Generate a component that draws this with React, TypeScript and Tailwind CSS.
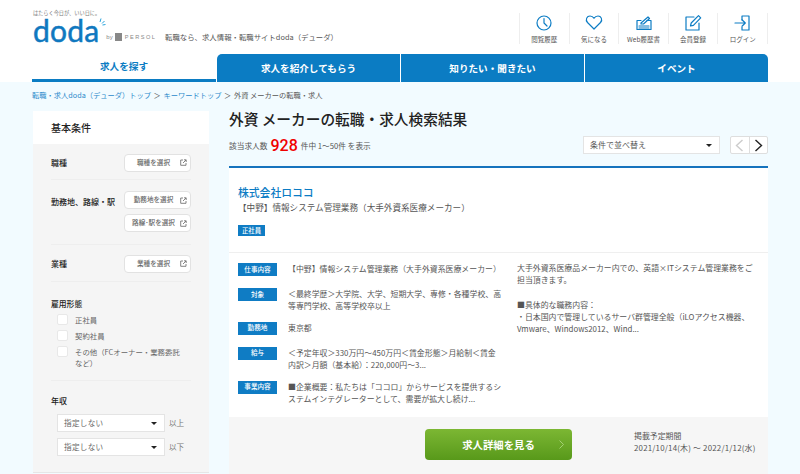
import type { ReactNode } from 'react';

const jp = 'font-["Noto_Sans_CJK_JP","Noto_Sans",sans-serif]';

function HeaderLink({ label, children }: { label: string; children: ReactNode }) {
  return (
    <div className="flex h-[31px] w-[49.6px] flex-col items-center justify-between border-r border-[#eeeeee] pb-[1px]">
      <svg width="20" height="20" viewBox="0 0 20 20" fill="none" stroke="#0c7cc4" strokeWidth="1.2" strokeLinejoin="round" strokeLinecap="round">
        {children}
      </svg>
      <span className="text-[6.5px] leading-[8px] text-[#555]">{label}</span>
    </div>
  );
}

function SelectButton({ label }: { label: string }) {
  return (
    <div className="flex h-[18px] w-[67px] items-center justify-between rounded-[4px] border border-[#e2e2e2] bg-white pl-[4px] pr-[3px] text-[6.6px] text-[#666]">
      <span className="flex-1 text-center whitespace-nowrap">{label}</span>
      <svg width="7" height="7" viewBox="0 0 7 7" fill="none" stroke="#666" strokeWidth="0.8" className="ml-[2px] shrink-0">
        <path d="M3 1H.7v5.3H6V4" />
        <path d="M3 4l3-3M4 .8h2.2V3" />
      </svg>
    </div>
  );
}

function Caret() {
  return <span className="h-0 w-0 border-x-[3px] border-t-[3px] border-x-transparent border-t-[#222]" />;
}

function Check({ label }: { label: ReactNode }) {
  return (
    <div className="flex items-start">
      <span className="h-[11px] w-[11px] shrink-0 rounded-[2px] border border-[#e8e8e8] bg-white" />
      <span className="ml-[7px] w-[108px] text-[7.4px] leading-[11px] text-[#666]">{label}</span>
    </div>
  );
}

function Salary({ suffix }: { suffix: string }) {
  return (
    <div className="flex items-center">
      <div className="flex h-[18px] w-[108px] items-center justify-between border border-[#e4e4e4] bg-white pl-[6px] pr-[7px] text-[7.6px] tracking-[0.3px] text-[#666]">
        指定しない
        <Caret />
      </div>
      <span className="ml-[4px] text-[7.6px] text-[#777]">{suffix}</span>
    </div>
  );
}

function JobRow({ label, children }: { label: string; children: ReactNode }) {
  return (
    <div className="mb-[9px] flex min-h-[16px] items-start">
      <span className="flex h-[13px] w-[39px] shrink-0 items-center justify-center bg-[#0f7cc4] text-[6.6px] font-medium text-white">{label}</span>
      <p className="ml-[11px] w-[216px] text-[7.9px] leading-[12.4px] text-[#555]">{children}</p>
    </div>
  );
}

export default function App() {
  return (
    <div className={`${jp} h-[474px] w-[800px] overflow-hidden bg-white`}>
      {/* Header */}
      <header className="flex h-[54px] pl-[33px] pr-[32px]">
        <div className="w-[132px] pt-[10px]">
          <p className="text-[5.2px] leading-[6px] text-[#777]">はたらく今日が、いい日に。</p>
          <div className="mt-[2px] flex items-end">
            <span className="font-['Lato',sans-serif] text-[30px] leading-[22px] tracking-[0.2px] text-[#0f78bf] [-webkit-text-stroke:0.5px_#0f78bf]">doda</span>
            <svg width="7" height="9" viewBox="0 0 7 9" fill="none" stroke="#29a3dc" strokeWidth="1" className="mb-[14px] shrink-0">
              <path d="M2 0.5L1 4M5.5 3L3 5.5M6.5 6.5L3.5 7" />
            </svg>
            <span className="whitespace-nowrap font-['Liberation_Sans',sans-serif] text-[6px] leading-[8px] text-[#888]">by</span>
            <span className="ml-[2px] h-[8px] w-[7px] shrink-0 bg-[#888]" />
            <span className="ml-[3px] font-['Liberation_Sans',sans-serif] text-[5.6px] leading-[8px] tracking-[1.5px] text-[#888]">PERSOL</span>
          </div>
        </div>
        <p className="pt-[32px] text-[7.4px] leading-[10px] whitespace-nowrap text-[#555]">転職なら、求人情報・転職サイトdoda（デューダ）</p>
        <nav className="ml-auto mt-[13px] flex h-[31px] border-l border-[#eeeeee]">
          <HeaderLink label="閲覧履歴">
            <circle cx="10" cy="10" r="7" />
            <path d="M10 5.500V10l3 3" />
          </HeaderLink>
          <HeaderLink label="気になる">
            <path d="M10 16L3.500 9.500C1 6.500 3 3 6 3c2 0 3.200 1 4 2.300 .8-1.300 2-2.300 4-2.300 3 0 5 3.500 2.500 6.500z" />
          </HeaderLink>
          <HeaderLink label="Web履歴書">
            <path d="M3 7.500h4M13 7.500h4v9H3v-9" />
            <path d="M7 10l7-6 1.500 1.500-6 5.500H7zM5 13h10M5 15h10" />
          </HeaderLink>
          <HeaderLink label="会員登録">
            <path d="M16 10v7H3V4h8" />
            <path d="M7.500 13l.7-3 7.300-7.300 2.200 2.200-7.300 7.400z" />
          </HeaderLink>
          <HeaderLink label="ログイン">
            <path d="M9 7V3h7v14H9v-3" />
            <path d="M2 10h10M9 6.800L12.300 10 9 13.200" />
          </HeaderLink>
        </nav>
      </header>

      {/* Tabs */}
      <nav className="flex h-[28px] gap-[1px] px-[32px] text-[9.6px] font-bold">
        <div className="flex w-[184px] items-center justify-center border-b-[3px] border-[#0b7cc3] text-[#0b7cc3]">求人を探す</div>
        <div className="flex w-[183px] items-center justify-center rounded-tl-[5px] bg-[#0b7cc3] text-white">求人を紹介してもらう</div>
        <div className="flex w-[183px] items-center justify-center bg-[#0b7cc3] text-white">知りたい・聞きたい</div>
        <div className="flex w-[183px] items-center justify-center rounded-tr-[5px] bg-[#0b7cc3] text-white">イベント</div>
      </nav>

      <div className="h-[392px] bg-[#f2fbff] px-[32px]">
        {/* Breadcrumb */}
        <p className="h-[29px] pt-[8px] text-[7.25px] leading-[10px] whitespace-nowrap text-[#555]">
          <span className="text-[#2b8acb]">転職・求人doda（デューダ）トップ</span>
          <span className="mx-[1px]"> ＞ </span>
          <span className="text-[#2b8acb]">キーワードトップ</span>
          <span className="mx-[1px]"> ＞ </span>
          <span>外資 メーカーの転職・求人</span>
        </p>

        <div className="flex items-start">
          {/* Sidebar */}
          <aside className="ml-[1px] w-[176px] shrink-0 border-b border-[#e6e6e6] bg-[#f5f5f5]">
            <h2 className="flex h-[33px] items-center bg-white pb-[1px] pl-[18px] text-[10px] font-medium text-[#222]">基本条件</h2>
            <div className="px-[18px] text-[8px] font-medium text-[#222]">
              <div className="flex h-[36px] items-center justify-between border-b border-[#eeeeee] pt-[2px]">
                <span>職種</span>
                <SelectButton label="職種を選択" />
              </div>
              <div className="flex h-[65px] justify-between border-b border-[#eeeeee] pt-[11px]">
                <span className="pt-[5px] whitespace-nowrap">勤務地、路線・駅</span>
                <div className="flex flex-col gap-[5px]">
                  <SelectButton label="勤務地を選択" />
                  <SelectButton label="路線･駅を選択" />
                </div>
              </div>
              <div className="flex h-[37px] items-center justify-between border-b border-[#eeeeee] pt-[1px]">
                <span>業種</span>
                <SelectButton label="業種を選択" />
              </div>
              <div className="h-[99px] border-b border-[#eeeeee] pt-[17px]">
                <p className="text-[7.8px] leading-[10px]">雇用形態</p>
                <div className="mt-[5px] ml-[6px] flex flex-col gap-[5px] font-normal">
                  <Check label="正社員" />
                  <Check label="契約社員" />
                  <Check label="その他（FCオーナー・業務委託など）" />
                </div>
              </div>
              <div className="h-[91px] pt-[14px]">
                <p className="text-[8px] leading-[12px]">年収</p>
                <div className="mt-[7px] ml-[6px] flex flex-col gap-[6px] font-normal">
                  <Salary suffix="以上" />
                  <Salary suffix="以下" />
                </div>
              </div>
            </div>
          </aside>

          {/* Results */}
          <main className="ml-[20px] flex-1">
            <h1 className="-mt-[1px] text-[14.7px] leading-[17px] font-medium whitespace-nowrap text-[#222]">外資 メーカーの転職・求人検索結果</h1>
            <div className="mt-[9px] flex h-[20px] items-center">
              <p className="flex items-center text-[7.7px] whitespace-nowrap text-[#555]">
                該当求人数
                <span className="mx-[3px] font-['Roboto',sans-serif] text-[16px] leading-[20px] font-medium text-[#f00000]">928</span>
                件中 1〜50件 を表示
              </p>
              <div className="mb-[2px] ml-auto flex h-[18px] w-[137px] items-center justify-between border border-[#e4e4e4] bg-white pl-[6px] pr-[7px] text-[8px] text-[#555]">
                条件で並べ替え
                <Caret />
              </div>
              <div className="mb-[2px] ml-[10px] flex h-[18px] w-[38px] rounded-[2px] border border-[#dedede] bg-white">
                <div className="flex flex-1 items-center justify-center border-r border-[#dedede]">
                  <svg width="9" height="13" viewBox="0 0 9 13" fill="none" stroke="#cccccc" strokeWidth="1.400">
                    <path d="M7.500 1L1.500 6.500l6 5.500" />
                  </svg>
                </div>
                <div className="flex flex-1 items-center justify-center">
                  <svg width="9" height="13" viewBox="0 0 9 13" fill="none" stroke="#222222" strokeWidth="1.400">
                    <path d="M1.500 1l6 5.500-6 5.500" />
                  </svg>
                </div>
              </div>
            </div>

            <article className="mt-[10px] border-t-[2px] border-[#1673bd] bg-white">
              <div className="h-[85px] border-b border-[#efefef] px-[9px] pt-[18px]">
                <h3 className="text-[10.8px] leading-[13px] font-medium text-[#0c7cc4]">株式会社ロココ</h3>
                <p className="mt-[2px] text-[8.6px] leading-[12px] whitespace-nowrap text-[#555]">【中野】情報システム管理業務（大手外資系医療メーカー）</p>
                <span className="mt-[12px] flex h-[11px] w-[27px] items-center justify-center bg-[#0f7cc4] text-[6.4px] font-medium text-white">正社員</span>
              </div>
              <div className="flex h-[164px] pt-[10px] pl-[9px]">
                <div className="w-[279px]">
                  <JobRow label="仕事内容">【中野】情報システム管理業務（大手外資系医療メーカー）</JobRow>
                  <JobRow label="対象">＜最終学歴＞大学院、大学、短期大学、専修・各種学校、高等専門学校、高等学校卒以上</JobRow>
                  <JobRow label="勤務地">東京都</JobRow>
                  <JobRow label="給与">
                    ＜予定年収＞330万円〜450万円＜賃金形態＞月給制＜賃金
                    <br />
                    内訳＞月額（基本給）：220,000円〜3...
                  </JobRow>
                  <JobRow label="事業内容">■企業概要：私たちは「ココロ」からサービスを提供するシステムインテグレーターとして、需要が拡大し続け...</JobRow>
                </div>
                <p className="-mt-[1px] h-fit w-[238px] text-[7.9px] leading-[12.3px] text-[#555]">
                  大手外資系医療品メーカー内での、英語×ITシステム管理業務をご担当頂きます。
                  <br />
                  <br />
                  ■具体的な職務内容：
                  <br />
                  ・日本国内で管理しているサーバ群管理全般（iLOアクセス機器、Vmware、Windows2012、Wind...
                </p>
              </div>
              <div className="flex h-[60px] items-start bg-[#f6f6f6] pt-[12px] pl-[196px]">
                <div className="relative flex h-[31px] w-[147px] items-center justify-center rounded-[4px] bg-gradient-to-b from-[#7cb733] to-[#58991a] text-[10.4px] font-bold text-white">
                  求人詳細を見る
                  <svg width="5" height="9" viewBox="0 0 5 9" fill="none" stroke="#a9d47c" strokeWidth="0.9" className="absolute right-[8px] top-[11px]">
                    <path d="M.5.5l4 4-4 4" />
                  </svg>
                </div>
                <p className="ml-[62px] pt-[1px] text-[7.9px] leading-[12px] whitespace-nowrap text-[#555]">
                  掲載予定期間
                  <br />
                  <span className="tracking-[0.2px]">2021/10/14(木) 〜 2022/1/12(水)</span>
                </p>
              </div>
            </article>
          </main>
        </div>
      </div>
    </div>
  );
}
